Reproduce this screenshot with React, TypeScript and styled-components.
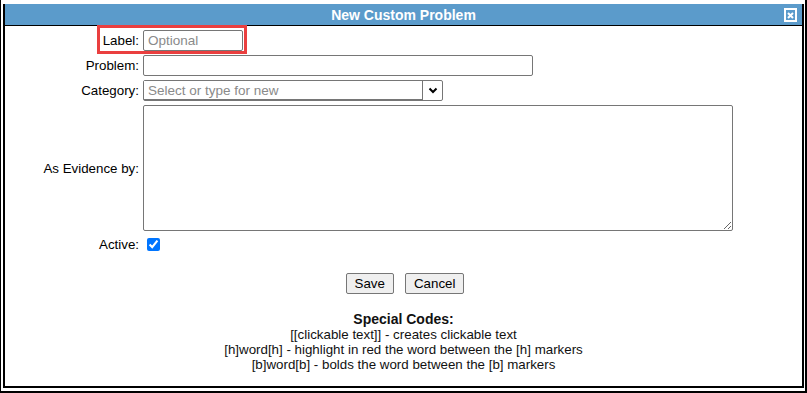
import React from 'react';
import styled, { createGlobalStyle } from 'styled-components';

const GlobalStyle = createGlobalStyle`
  html, body {
    margin: 0;
    padding: 0;
    background: #ffffff;
  }
  body {
    font-family: "Liberation Sans", Arial, sans-serif;
    font-size: 13.33px;
    color: #000;
  }
`;

const Frame = styled.div`
  width: 807px;
  height: 393px;
  box-sizing: border-box;
  border-left: 1px solid #000;
  border-right: 2px solid #000;
  border-bottom: 2px solid #000;
  padding: 4px 1px 3px 2px;
  background: #fff;
`;

const Dialog = styled.div`
  position: relative;
  height: 100%;
  box-sizing: border-box;
  border: 2px solid #000;
  border-top: none;
  display: flex;
  flex-direction: column;
`;

const Header = styled.div`
  position: relative;
  height: 21px;
  background: #5b9bcb;
  border-bottom: 1px solid #000;
  display: flex;
  align-items: center;
  justify-content: center;
  color: #fff;
  font-weight: bold;
  font-size: 14px;
`;

const CloseButton = styled.button`
  position: absolute;
  right: 5px;
  top: 4px;
  width: 13px;
  height: 14px;
  padding: 0;
  box-sizing: border-box;
  border: 2px solid #fff;
  background: transparent;
  display: flex;
  align-items: center;
  justify-content: center;
  cursor: pointer;
`;

const Form = styled.div`
  display: grid;
  grid-template-columns: 134px 1fr;
  column-gap: 4px;
  row-gap: 4px;
  padding-top: 4px;
  align-items: center;
`;

const FieldLabel = styled.label`
  text-align: right;
  font-size: 13.33px;
  line-height: 15px;
`;

const TextInput = styled.input<{ $width: number }>`
  width: ${(p) => p.$width}px;
  height: 21px;
  box-sizing: border-box;
  border: 1px solid #767676;
  border-radius: 2px;
  padding: 1px 4px;
  font-family: "Liberation Sans", Arial, sans-serif;
  font-size: 13.5px;
  color: #000;
  outline: none;
  &::placeholder {
    color: #8a8a8a;
  }
`;

const Combo = styled.div`
  width: 300px;
  height: 21px;
  box-sizing: border-box;
  border: 1px solid #767676;
  border-radius: 2px;
  display: flex;
  align-items: stretch;
`;

const ComboInput = styled.input`
  flex: 1;
  min-width: 0;
  box-sizing: border-box;
  border: none;
  border-right: 1px solid #767676;
  border-bottom: 1px solid #767676;
  padding: 0 4px;
  font-family: "Liberation Sans", Arial, sans-serif;
  font-size: 13.5px;
  outline: none;
  &::placeholder {
    color: #8a8a8a;
  }
`;

const ComboArrow = styled.div`
  width: 19px;
  display: flex;
  align-items: center;
  justify-content: center;
`;

const TextArea = styled.textarea`
  width: 590px;
  height: 126px;
  box-sizing: border-box;
  border: 1px solid #767676;
  border-radius: 2px;
  font-family: "Liberation Sans", Arial, sans-serif;
  font-size: 13px;
  margin: 0;
  outline: none;
  display: block;
`;

const CheckBox = styled.input`
  width: 13px;
  height: 13px;
  margin: 3px 0 3px 4px;
  display: block;
`;

const ButtonRow = styled.div`
  display: flex;
  justify-content: center;
  gap: 11px;
  margin-top: 19px;
  padding-left: 3px;
`;

const Button = styled.button`
  height: 21px;
  box-sizing: border-box;
  padding: 0 8px;
  border: 1px solid #767676;
  border-radius: 2px;
  background: #efefef;
  font-family: "Liberation Sans", Arial, sans-serif;
  font-size: 13.33px;
  color: #000;
`;

const Codes = styled.div`
  margin-top: 18px;
  text-align: center;
  font-size: 13.33px;
  line-height: 15px;
  color: #111;
`;

const CodesTitle = styled.div`
  font-weight: bold;
  font-size: 14px;
`;

const Highlight = styled.div`
  position: absolute;
  left: 92px;
  top: -1px;
  width: 150px;
  height: 29px;
  box-sizing: border-box;
  border: 3px solid #ea3f3f;
  pointer-events: none;
`;

const FormArea = styled.div`
  position: relative;
`;

export default function App() {
  return (
    <>
      <GlobalStyle />
      <Frame>
        <Dialog>
          <Header>
            New Custom Problem
            <CloseButton aria-label="close">
              <svg width="7" height="7" viewBox="0 0 7 7">
                <path d="M1 1L6 6M6 1L1 6" stroke="#fff" strokeWidth="2" />
              </svg>
            </CloseButton>
          </Header>
          <FormArea>
            <Form>
              <FieldLabel>Label:</FieldLabel>
              <div>
                <TextInput $width={100} placeholder="Optional" />
              </div>
              <FieldLabel>Problem:</FieldLabel>
              <div>
                <TextInput $width={390} />
              </div>
              <FieldLabel>Category:</FieldLabel>
              <Combo>
                <ComboInput placeholder="Select or type for new" />
                <ComboArrow>
                  <svg width="10" height="7" viewBox="0 0 10 7">
                    <path d="M1.5 1.5L5 5L8.5 1.5" fill="none" stroke="#000" strokeWidth="2" />
                  </svg>
                </ComboArrow>
              </Combo>
              <FieldLabel>As Evidence by:</FieldLabel>
              <div>
                <TextArea />
              </div>
              <FieldLabel>Active:</FieldLabel>
              <div>
                <CheckBox type="checkbox" defaultChecked />
              </div>
            </Form>
            <Highlight />
          </FormArea>
          <ButtonRow>
            <Button>Save</Button>
            <Button>Cancel</Button>
          </ButtonRow>
          <Codes>
            <CodesTitle>Special Codes:</CodesTitle>
            <div>[[clickable text]] - creates clickable text</div>
            <div>[h]word[h] - highlight in red the word between the [h] markers</div>
            <div>[b]word[b] - bolds the word between the [b] markers</div>
          </Codes>
        </Dialog>
      </Frame>
    </>
  );
}
